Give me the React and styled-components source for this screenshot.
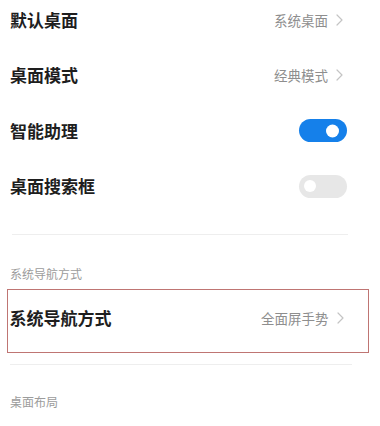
import React from "react";
import styled, { createGlobalStyle } from "styled-components";

const Global = createGlobalStyle`
  html, body { margin: 0; padding: 0; background: #ffffff; }
  body {
    font-family: "Noto Sans CJK SC", "Noto Sans", sans-serif;
    -webkit-font-smoothing: antialiased;
  }
`;

const Page = styled.div`
  width: 380px;
  height: 426px;
  overflow: hidden;
  background: #fff;
`;

const List = styled.div`
  margin-top: -8px;
  display: flex;
  flex-direction: column;
`;

const Row = styled.div`
  height: 55.5px;
  display: flex;
  align-items: center;
  justify-content: space-between;
  padding: 0 ${(p) => (p.$toggle ? "33px" : "37px")} 0 10px;
`;

const Title = styled.span`
  font-size: 17px;
  font-weight: 700;
  color: #1e1e1e;
  line-height: 20px;
`;

const ValueWrap = styled.span`
  display: flex;
  align-items: center;
  gap: 8px;
`;

const Value = styled.span`
  font-size: 13.5px;
  color: #8e8e8e;
  line-height: 18px;
`;

const Chevron = () => (
  <svg width="7" height="12" viewBox="0 0 7 12" fill="none">
    <path d="M1 1l5 5-5 5" stroke="#c4c4c4" strokeWidth="1.2" strokeLinecap="round" strokeLinejoin="round" />
  </svg>
);

const Switch = styled.span`
  position: relative;
  width: 48px;
  height: 23px;
  border-radius: 12px;
  background: ${(p) => (p.$on ? "#1580ea" : "#e7e7e7")};
  flex-shrink: 0;
`;

const Knob = styled.span`
  position: absolute;
  top: 50%;
  width: ${(p) => (p.$on ? "13px" : "12px")};
  height: ${(p) => (p.$on ? "13px" : "12px")};
  border-radius: 50%;
  background: #fff;
  transform: translateY(-50%);
  ${(p) => (p.$on ? "right: 8px;" : "left: 5px;")}
`;

const Divider = styled.div`
  height: 1px;
  background: #eeeeee;
  margin: ${(p) => p.$m};
`;

const SectionHeader = styled.div`
  font-size: 12px;
  line-height: 16px;
  color: #9c9c9c;
  padding-left: 10px;
  margin-top: ${(p) => p.$mt};
`;

const Highlight = styled.div`
  margin: 7px 11px 0 7px;
  height: 64px;
  box-sizing: border-box;
  border: 1.5px solid #bf7573;
  display: flex;
  align-items: center;
  justify-content: space-between;
  padding: 0 24.5px 6px 1.5px;
`;

const Item = ({ title, value }) => (
  <Row>
    <Title>{title}</Title>
    <ValueWrap>
      <Value>{value}</Value>
      <Chevron />
    </ValueWrap>
  </Row>
);

const ToggleItem = ({ title, on }) => (
  <Row $toggle>
    <Title>{title}</Title>
    <Switch $on={on}>
      <Knob $on={on} />
    </Switch>
  </Row>
);

export default function App() {
  return (
    <Page>
      <Global />
      <List>
        <Item title="默认桌面" value="系统桌面" />
        <Item title="桌面模式" value="经典模式" />
        <ToggleItem title="智能助理" on />
        <ToggleItem title="桌面搜索框" on={false} />
      </List>
      <Divider $m="20px 32px 0 12px" />
      <SectionHeader $mt="31px">系统导航方式</SectionHeader>
      <Highlight>
        <Title>系统导航方式</Title>
        <ValueWrap>
          <Value>全面屏手势</Value>
          <Chevron />
        </ValueWrap>
      </Highlight>
      <Divider $m="11px 28px 0 10px" />
      <SectionHeader $mt="29px">桌面布局</SectionHeader>
    </Page>
  );
}
